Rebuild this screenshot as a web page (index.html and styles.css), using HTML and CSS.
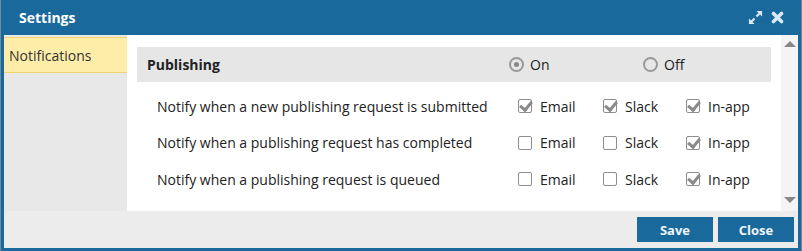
FILE: index.html
```html
<!DOCTYPE html>
<html lang="en">
<head>
  <meta charset="UTF-8" />
  <title>Settings</title>
  <link rel="stylesheet" href="styles.css">
</head>
<body>
  <div class="dialog">
    <div class="titlebar">
      <span class="title">Settings</span>
      <span class="tools">
        <svg width="15" height="15" viewBox="0 0 16 16">
          <path d="M9 1h6v6l-2.2-2.2-3 3-1.6-1.6 3-3z M7 15H1V9l2.2 2.2 3-3 1.6 1.6-3 3z" fill="#dbe9f4"/>
        </svg>
        <svg width="13" height="13" viewBox="0 0 13 13">
          <path d="M2.5 2.5l8 8M10.5 2.5l-8 8" stroke="#dbe9f4" stroke-width="3.6" stroke-linecap="round"/>
        </svg>
      </span>
    </div>
    <div class="body">
      <div class="nav">
        <div class="nav-item">Notifications</div>
      </div>
      <div class="content">
        <div class="band">
          <strong>Publishing</strong>
          <label class="opt"><span class="radio on"></span>On</label>
          <label class="opt"><span class="radio"></span>Off</label>
        </div>
        <div class="rows">
          <div class="row">
            <span>Notify when a new publishing request is submitted</span>
            <label class="opt"><span class="cb checked"></span>Email</label>
            <label class="opt"><span class="cb checked"></span>Slack</label>
            <label class="opt"><span class="cb checked"></span>In-app</label>
          </div>
          <div class="row">
            <span>Notify when a publishing request has completed</span>
            <label class="opt"><span class="cb"></span>Email</label>
            <label class="opt"><span class="cb"></span>Slack</label>
            <label class="opt"><span class="cb checked"></span>In-app</label>
          </div>
          <div class="row">
            <span>Notify when a publishing request is queued</span>
            <label class="opt"><span class="cb"></span>Email</label>
            <label class="opt"><span class="cb"></span>Slack</label>
            <label class="opt"><span class="cb checked"></span>In-app</label>
          </div>
        </div>
      </div>
      <div class="scroll">
        <span class="up"></span>
        <span class="down"></span>
      </div>
    </div>
    <div class="footer">
      <button>Save</button>
      <button>Close</button>
    </div>
  </div>
</body>
</html>
```
FILE: styles.css
```css
* {
  box-sizing: border-box;
}

body {
  margin: 0;
  background-color: #6f8aa0;
  font-family: "Open Sans", "Noto Sans", sans-serif;
  font-size: 14px;
  color: #222;
}

.dialog {
  margin-left: 1px;
  width: 800px;
  height: 251px;
  border: 3px solid #1a699c;
  border-top: none;
  background-color: #fff;
  display: flex;
  flex-direction: column;
}

.titlebar {
  height: 35px;
  background-color: #1a699c;
  display: flex;
  align-items: center;
  justify-content: space-between;
  padding: 0 17px 0 18px;
  margin: 0 -3px;
}

.title {
  color: #fff;
  font-weight: bold;
  font-size: 14px;
}

.tools {
  display: flex;
  align-items: center;
  gap: 8px;
}

.body {
  display: flex;
  height: 176px;
}

.nav {
  width: 123px;
  background-color: #e8e8e8;
  padding-top: 2px;
}

.nav-item {
  background-color: #feeda9;
  border-top: 1px solid #f3d36b;
  border-bottom: 1px solid #f3d36b;
  height: 36px;
  line-height: 35px;
  padding-left: 5px;
  color: #333;
}

.content {
  flex: 1;
  padding: 12px 10px 0 10px;
}

.band {
  background-color: #e6e6e6;
  height: 35px;
  display: grid;
  grid-template-columns: 362px 134px auto;
  align-items: center;
  padding-left: 10px;
}

.rows {
  margin: 6px 0 0 20px;
}

.row {
  display: grid;
  grid-template-columns: 361px 85px 83px auto;
  align-items: center;
  height: 36.5px;
}

.opt {
  display: flex;
  align-items: center;
  gap: 8px;
}

.band .opt {
  gap: 6px;
}

.radio {
  width: 15px;
  height: 15px;
  border: 2px solid #999;
  border-radius: 50%;
  display: inline-flex;
  align-items: center;
  justify-content: center;
}

.radio.on::after {
  content: "";
  width: 5px;
  height: 5px;
  border-radius: 50%;
  background-color: #888;
}

.cb {
  width: 14px;
  height: 14px;
  border: 1px solid #8e8e8e;
  border-radius: 2px;
  position: relative;
}

.cb.checked::after {
  content: "";
  position: absolute;
  left: 3px;
  top: -1px;
  width: 5px;
  height: 9px;
  border-right: 3px solid #8a8a8a;
  border-bottom: 3px solid #8a8a8a;
  transform: rotate(40deg);
}

.scroll {
  width: 17px;
  background-color: #f4f4f4;
  display: flex;
  flex-direction: column;
  justify-content: space-between;
  align-items: center;
  padding: 6px 0 8px;
}

.up {
  width: 0;
  height: 0;
  border-left: 6px solid transparent;
  border-right: 6px solid transparent;
  border-bottom: 6px solid #888;
}

.down {
  width: 0;
  height: 0;
  border-left: 6px solid transparent;
  border-right: 6px solid transparent;
  border-top: 6px solid #888;
}

.footer {
  flex: 1;
  background-color: #ececec;
  display: flex;
  justify-content: flex-end;
  align-items: center;
  gap: 5px;
  padding-right: 4px;
}

.footer button {
  width: 76px;
  height: 25px;
  background-color: #1a699c;
  color: #eef4f8;
  border: none;
  font-family: "Open Sans", sans-serif;
  font-weight: bold;
  font-size: 13px;
}
```
